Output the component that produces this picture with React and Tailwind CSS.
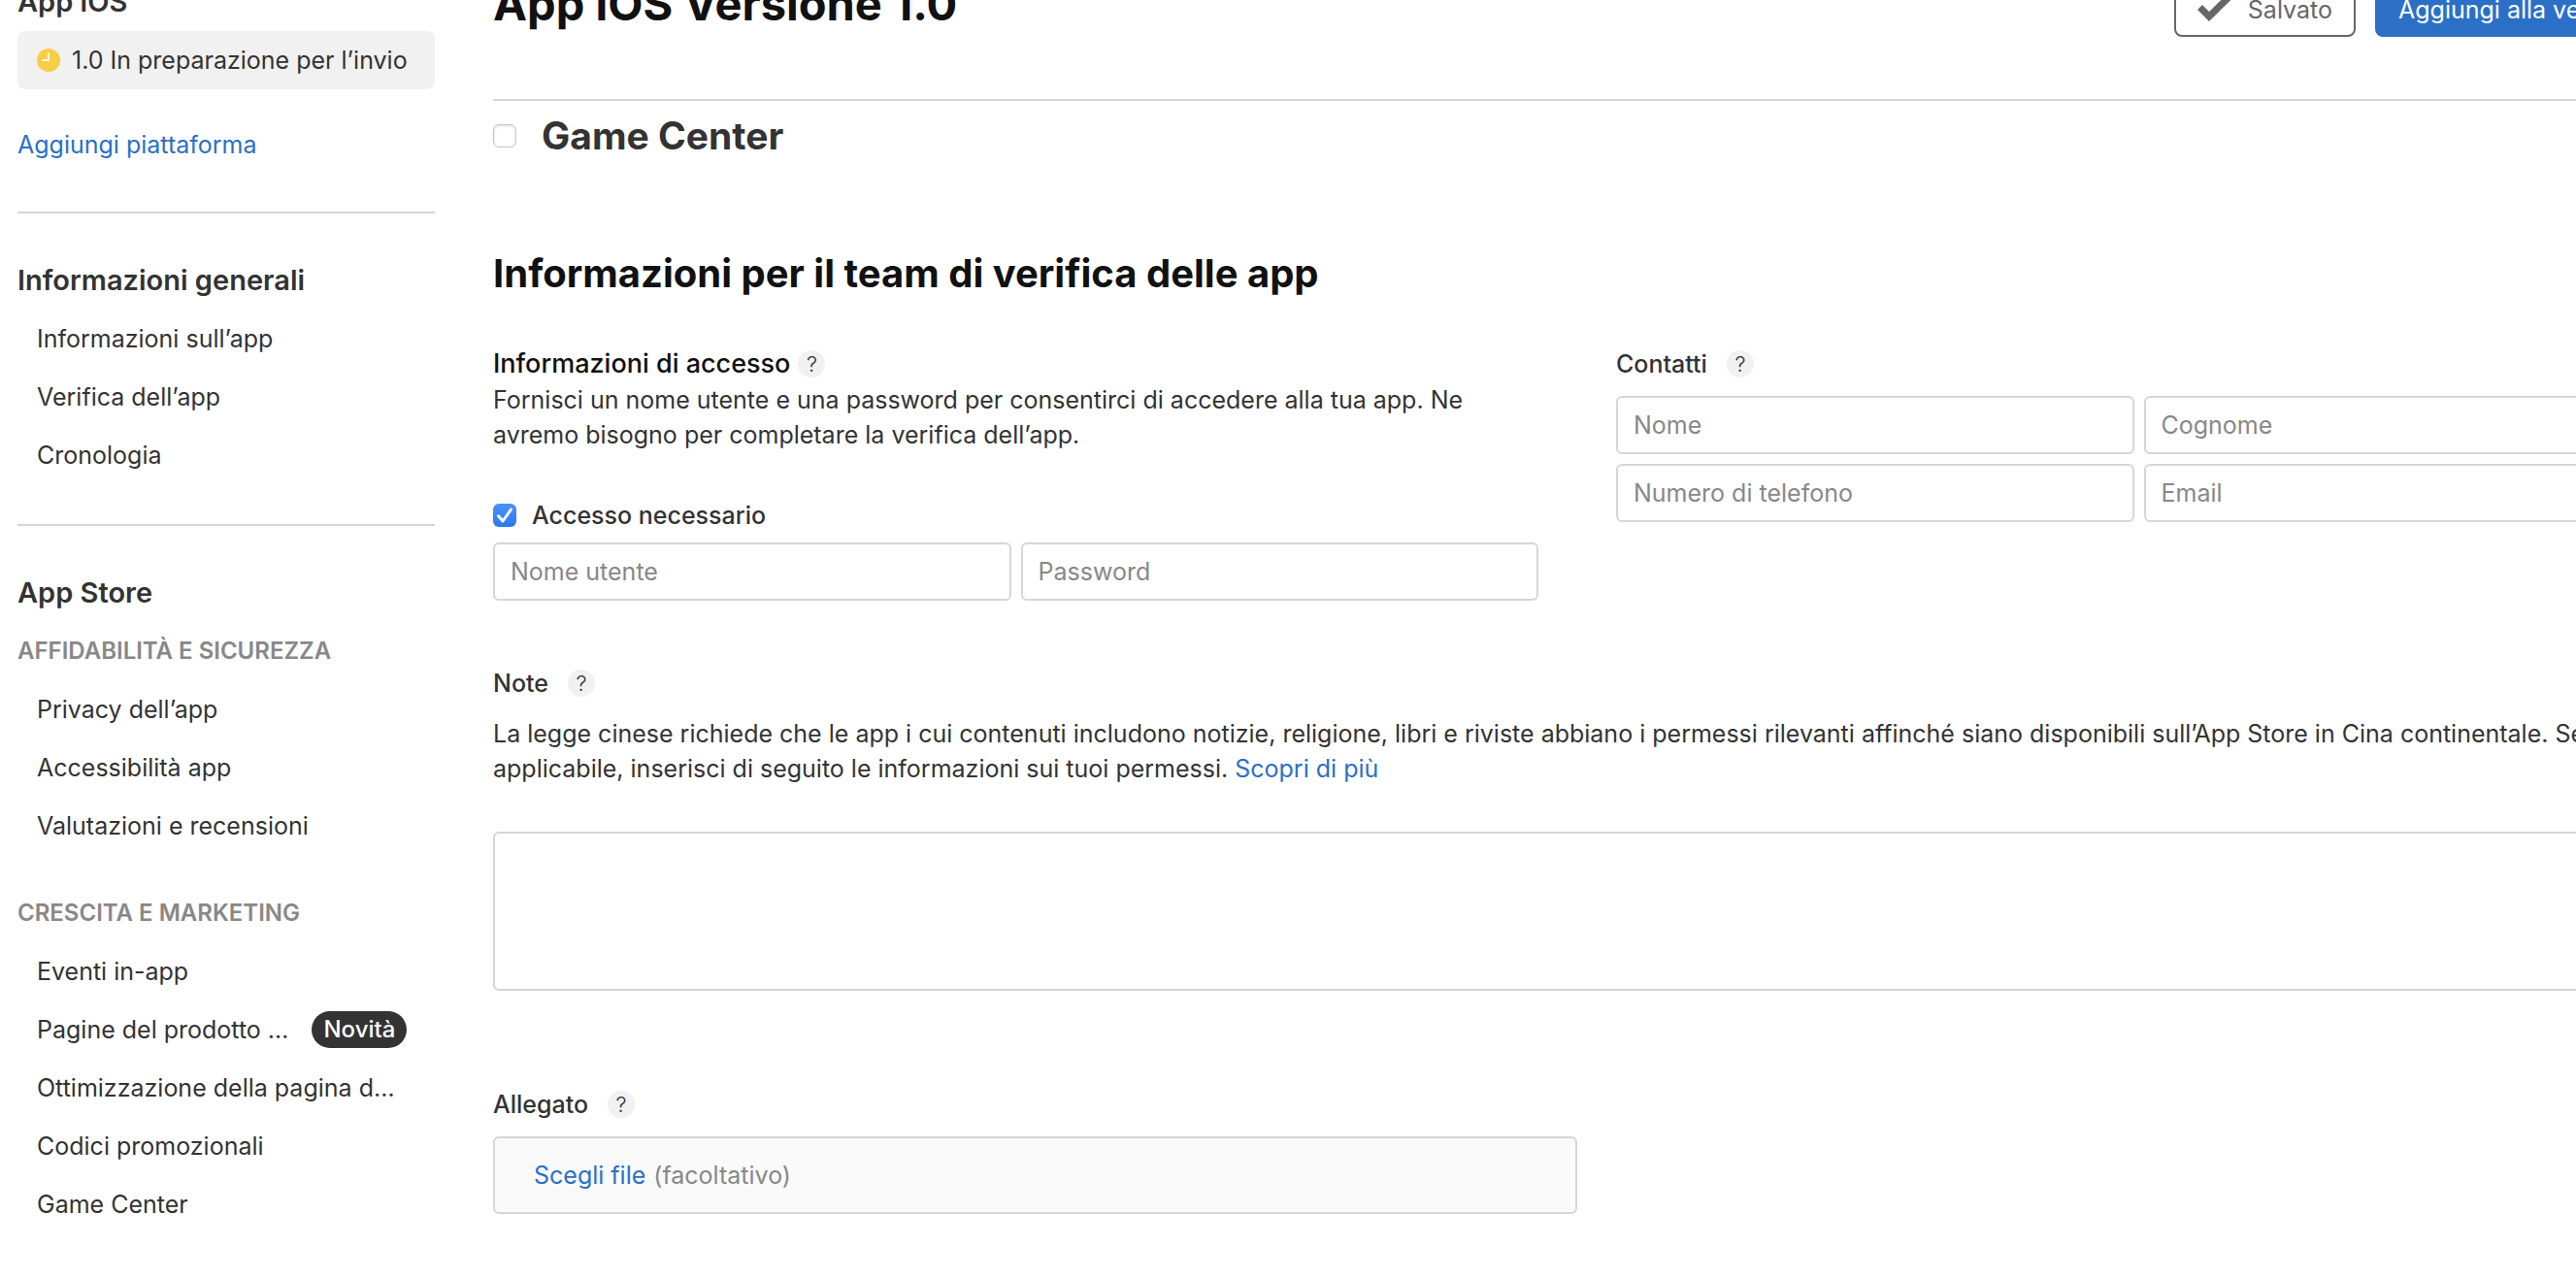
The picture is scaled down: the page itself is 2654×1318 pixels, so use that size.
import { useId } from "react";

function NavItem({ children, badge }) {
  return (
    <li className="flex h-[60px] items-center gap-6 pl-5">
      <a href="#" className="whitespace-nowrap">{children}</a>
      {badge && (
        <span className="flex h-[38px] items-center rounded-full bg-[#333333] px-3 text-[24px] font-medium text-white">
          {badge}
        </span>
      )}
    </li>
  );
}

function NavTitle({ children }) {
  return <h2 className="flex h-[60px] items-center text-[29px] font-semibold">{children}</h2>;
}

function NavLabel({ children }) {
  return <h3 className="flex h-[60px] items-center text-[24px] font-semibold text-[#888888] uppercase">{children}</h3>;
}

function Divider() {
  return <hr className="my-[39px] border-0 border-t-2 border-[#d6d6d6]" />;
}

function Help() {
  return (
    <button type="button" aria-label="Aiuto" className="flex size-7 items-center justify-center rounded-full bg-[#f1f1f1] text-[22px] leading-7 font-light">
      ?
    </button>
  );
}

function Field({ label, type = "text" }) {
  return (
    <input
      type={type}
      aria-label={label}
      placeholder={label}
      className="h-[60px] w-full min-w-0 rounded-md border-2 border-[#d6d6d6] bg-white px-4 placeholder:text-[#888888]"
    />
  );
}

function ClockIcon() {
  return (
    <svg viewBox="0 0 24 24" className="size-6 shrink-0" aria-hidden="true">
      <circle cx="12" cy="12" r="12" fill="#f7ce46" />
      <path d="M12 5.3V12.2H6" fill="none" stroke="#fff" strokeWidth="1.8" strokeLinecap="round" strokeLinejoin="round" />
    </svg>
  );
}

function Sidebar() {
  return (
    <nav className="w-[430px] shrink-0">
      <NavTitle>App iOS</NavTitle>
      <a href="#" className="flex h-[60px] items-center gap-3 rounded-lg bg-[#f1f1f1] pl-5 whitespace-nowrap">
        <ClockIcon />
        1.0 In preparazione per l’invio
      </a>
      <div className="mt-[27px] flex h-[60px] items-center">
        <button type="button" className="text-[#2b70c6]">Aggiungi piattaforma</button>
      </div>
      <Divider />
      <NavTitle>Informazioni generali</NavTitle>
      <ul className="pb-[2px]">
        <NavItem>Informazioni sull’app</NavItem>
        <NavItem>Verifica dell’app</NavItem>
        <NavItem>Cronologia</NavItem>
      </ul>
      <Divider />
      <NavTitle>App Store</NavTitle>
      <NavLabel>Affidabilità e sicurezza</NavLabel>
      <ul className="mb-[30px]">
        <NavItem>Privacy dell’app</NavItem>
        <NavItem>Accessibilità app</NavItem>
        <NavItem>Valutazioni e recensioni</NavItem>
      </ul>
      <NavLabel>Crescita e marketing</NavLabel>
      <ul>
        <NavItem>Eventi in-app</NavItem>
        <NavItem badge="Novità">Pagine del prodotto …</NavItem>
        <NavItem>Ottimizzazione della pagina d…</NavItem>
        <NavItem>Codici promozionali</NavItem>
        <NavItem>Game Center</NavItem>
      </ul>
    </nav>
  );
}

function Header() {
  return (
    <header className="flex items-start justify-between border-b-2 border-[#d6d6d6] pt-[10px] pb-16">
      <h1 className="text-[47px] leading-[44px] font-bold text-[#111111]">App iOS Versione 1.0</h1>
      <div className="flex gap-5">
        <button type="button" className="flex h-14 items-center gap-3 rounded-lg border-2 border-[#666666] px-[22px] text-[#666666]">
          <svg viewBox="0 0 40 32" className="h-8 w-10" aria-hidden="true">
            <path d="M2.5 13.5 12 23 35 0.5" fill="none" stroke="#666666" strokeWidth="7" />
          </svg>
          Salvato
        </button>
        <button type="button" className="h-14 rounded-lg bg-[#2b70c6] px-6 text-white">Aggiungi alla verifica</button>
      </div>
    </header>
  );
}

export default function App() {
  const id = useId();
  return (
    <div className="overflow-hidden bg-white font-['Inter',sans-serif] text-[25px] leading-9 text-[#333333]">
      <div className="-mt-7 -mr-[88px] flex gap-[60px] pb-12 pl-[18px]">
        <Sidebar />
        <main className="min-w-0 flex-1">
          <Header />
          <div className="mt-3 flex h-12 items-center gap-[26px]">
            <input
              id={`${id}-gc`}
              type="checkbox"
              className="size-6 appearance-none rounded-md border border-[#c4c4c4] bg-white shadow-[inset_0_1px_3px_rgba(0,0,0,0.12)]"
            />
            <label htmlFor={`${id}-gc`} className="text-[39px] font-bold">Game Center</label>
          </div>

          <h2 className="mt-[94px] text-[40px] leading-[48px] font-bold text-[#111111]">
            Informazioni per il team di verifica delle app
          </h2>

          <div className="mt-[50px] grid grid-cols-2 gap-20">
            <section>
              <div className="flex h-[38px] items-center gap-2">
                <h3 className="text-[27px] font-medium text-[#111111]">Informazioni di accesso</h3>
                <Help />
              </div>
              <p className="max-w-[1060px]">
                Fornisci un nome utente e una password per consentirci di accedere alla tua app. Ne avremo bisogno per
                completare la verifica dell’app.
              </p>
              <div className="mt-[47px] flex h-9 items-center gap-4">
                <span className="relative size-6">
                  <input
                    id={`${id}-access`}
                    type="checkbox"
                    defaultChecked
                    className="block size-6 appearance-none rounded-md bg-linear-to-b from-[#4a92f8] to-[#2c78f5]"
                  />
                  <svg viewBox="0 0 24 24" className="pointer-events-none absolute inset-0 size-6" aria-hidden="true">
                    <path d="M5.5 12.8 10 18 18.5 6" fill="none" stroke="#fff" strokeWidth="3" strokeLinecap="round" strokeLinejoin="round" />
                  </svg>
                </span>
                <label htmlFor={`${id}-access`} className="font-medium">Accesso necessario</label>
              </div>
              <div className="mt-[10px] grid grid-cols-2 gap-[10px]">
                <Field label="Nome utente" />
                <Field label="Password" type="password" />
              </div>
            </section>

            <section>
              <div className="flex h-[38px] items-center gap-5">
                <h3 className="font-medium">Contatti</h3>
                <Help />
              </div>
              <div className="mt-[14px] grid grid-cols-2 gap-[10px]">
                <Field label="Nome" />
                <Field label="Cognome" />
                <Field label="Numero di telefono" type="tel" />
                <Field label="Email" type="email" />
              </div>
            </section>
          </div>

          <section className="mt-[67px]">
            <div className="flex h-9 items-center gap-5">
              <label htmlFor={`${id}-notes`} className="font-medium">Note</label>
              <Help />
            </div>
            <p className="mt-4">
              La legge cinese richiede che le app i cui contenuti includono notizie, religione, libri e riviste abbiano i
              permessi rilevanti affinché siano disponibili sull’App Store in Cina continentale. Se applicabile, inserisci
              di seguito le informazioni sui tuoi permessi.{" "}
              <a href="#" className="text-[#2b70c6]">Scopri di più</a>
            </p>
            <textarea id={`${id}-notes`} className="mt-[47px] block h-[164px] w-full resize-none rounded-md border-2 border-[#d6d6d6] px-4 py-3" />
          </section>

          <section className="mt-[99px]">
            <div className="flex h-9 items-center gap-5">
              <h3 className="font-medium">Allegato</h3>
              <Help />
            </div>
            <div className="mt-[15px] flex h-20 w-1/2 items-center gap-2 rounded-md border-2 border-[#d6d6d6] bg-[#fafafa] px-10 text-[#888888]">
              <button type="button" className="text-[#2b70c6]">Scegli file</button>
              (facoltativo)
            </div>
          </section>
        </main>
      </div>
    </div>
  );
}
